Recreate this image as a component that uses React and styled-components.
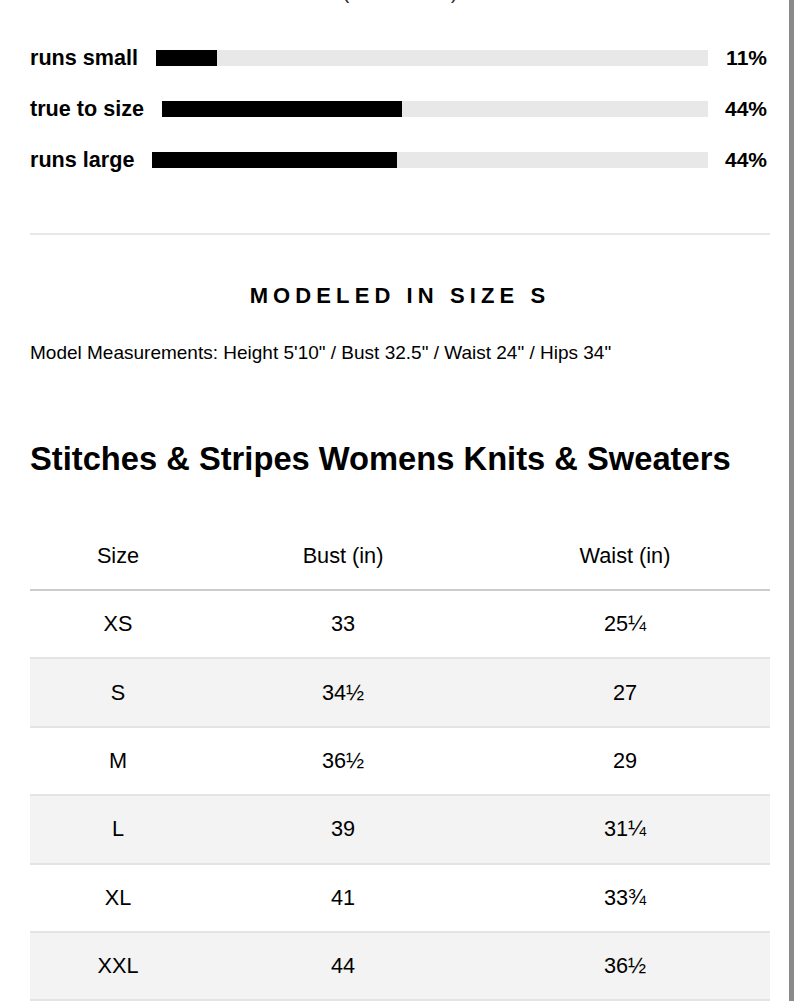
import React from 'react'
import styled, {createGlobalStyle} from 'styled-components'

const GlobalStyle = createGlobalStyle`
    body {
        margin: 0;
        background: #fff;
        color: #000;
        font-family: "Liberation Sans", Arial, sans-serif;
    }
`;

const Page = styled.div`
    width: 794px;
    min-height: 1001px;
    box-sizing: border-box;
    padding: 0 19px 0 30px;
    border-right: 5px solid #8a8a8a;
    overflow: hidden;
`;

const Reviews = styled.div`
    margin-top: -22px;
    font-size: 22px;
    line-height: 26px;
    text-align: center;
    color: #333;
`;

const Ratings = styled.div`
    margin-top: 28px;
`;

const RatingRow = styled.div`
    display: flex;
    align-items: center;
    height: 51px;
`;

const RatingLabel = styled.span`
    font-size: 21.6px;
    font-weight: bold;
    white-space: nowrap;
`;

const Track = styled.div`
    flex: 1;
    height: 16px;
    margin: 0 17px 0 18px;
    background: #e8e8e8;
`;

const Fill = styled.div`
    height: 100%;
    background: #000;
`;

const Percent = styled.span`
    width: 42px;
    margin-right: 3px;
    font-size: 21px;
    font-weight: bold;
    text-align: right;
`;

const Divider = styled.hr`
    margin: 48px 0 0;
    border: 0;
    border-top: 2px solid #e8e8e8;
`;

const ModeledTitle = styled.h3`
    margin: 48px 0 0;
    font-size: 22px;
    line-height: 26px;
    font-weight: bold;
    letter-spacing: 5.1px;
    text-align: center;
`;

const Measurements = styled.p`
    margin: 33px 0 0;
    font-size: 19px;
    line-height: 22px;
`;

const ChartTitle = styled.h2`
    margin: 76px 0 0;
    font-size: 32.7px;
    line-height: 38px;
    font-weight: bold;
`;

const Table = styled.table`
    width: 100%;
    margin-top: 45px;
    border-collapse: collapse;
    table-layout: fixed;
`;

const Th = styled.th`
    height: 66px;
    padding: 0;
    font-size: 21.7px;
    font-weight: normal;
    text-align: center;
    border-bottom: 2px solid #cdcdcd;
`;

const Tr = styled.tr`
    background: ${p => (p.$striped ? '#f3f3f3' : '#fff')};
`;

const Td = styled.td`
    height: 66.4px;
    padding: 0;
    font-size: 21.7px;
    text-align: center;
    border-bottom: 2px solid #e4e4e4;
`;

const ratings = [
    {label: 'runs small', value: 11},
    {label: 'true to size', value: 44},
    {label: 'runs large', value: 44},
]

const sizes = [
    ['XS', '33', '25¼'],
    ['S', '34½', '27'],
    ['M', '36½', '29'],
    ['L', '39', '31¼'],
    ['XL', '41', '33¾'],
    ['XXL', '44', '36½'],
]

export default function App() {
    return (
        <Page>
            <GlobalStyle/>
            <Reviews>(9 Reviews)</Reviews>
            <Ratings>
                {ratings.map(r => (
                    <RatingRow key={r.label}>
                        <RatingLabel>{r.label}</RatingLabel>
                        <Track>
                            <Fill style={{width: `${r.value}%`}}/>
                        </Track>
                        <Percent>{r.value}%</Percent>
                    </RatingRow>
                ))}
            </Ratings>
            <Divider/>
            <ModeledTitle>MODELED IN SIZE S</ModeledTitle>
            <Measurements>
                Model Measurements: Height 5'10" / Bust 32.5" / Waist 24" / Hips 34"
            </Measurements>
            <ChartTitle>Stitches &amp; Stripes Womens Knits &amp; Sweaters</ChartTitle>
            <Table>
                <colgroup>
                    <col style={{width: 176}}/>
                    <col style={{width: 274}}/>
                    <col style={{width: 290}}/>
                </colgroup>
                <thead>
                    <tr>
                        <Th>Size</Th>
                        <Th>Bust (in)</Th>
                        <Th>Waist (in)</Th>
                    </tr>
                </thead>
                <tbody>
                    {sizes.map((row, i) => (
                        <Tr key={row[0]} $striped={i % 2 === 1}>
                            {row.map((cell, j) => <Td key={j}>{cell}</Td>)}
                        </Tr>
                    ))}
                </tbody>
            </Table>
        </Page>
    )
}
